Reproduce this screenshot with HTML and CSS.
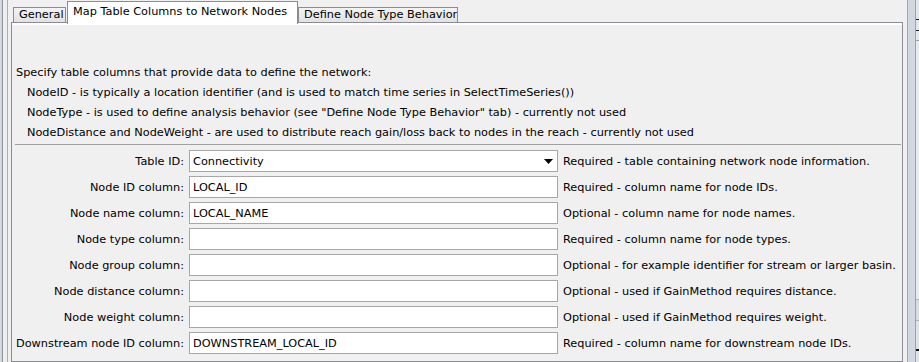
FILE: index.html
```html
<!DOCTYPE html>
<html lang="en">
<head>
  <meta charset="UTF-8">
  <title>Map Table Columns to Network Nodes</title>
  <link rel="stylesheet" href="styles.css">
</head>
<body>
  <div class="window">
    <div class="edge-left"></div>

    <div class="main">
      <div class="tabs">
        <div class="tab tab-general">General</div>
        <div class="tab tab-map active">Map Table Columns to Network Nodes</div>
        <div class="tab tab-define">Define Node Type Behavior</div>
      </div>

      <div class="panel">
        <div class="intro">
          <p>Specify table columns that provide data to define the network:</p>
          <p class="indent">NodeID - is typically a location identifier (and is used to match time series in SelectTimeSeries())</p>
          <p class="indent">NodeType - is used to define analysis behavior (see "Define Node Type Behavior" tab) - currently not used</p>
          <p class="indent">NodeDistance and NodeWeight - are used to distribute reach gain/loss back to nodes in the reach - currently not used</p>
        </div>

        <hr class="sep">

        <div class="form">
          <label>Table ID:</label>
          <div class="combo">
            <span>Connectivity</span>
            <svg width="9" height="5" viewBox="0 0 9 5"><path d="M0 0H9L4.5 5Z" fill="#000"/></svg>
          </div>
          <span class="desc">Required - table containing network node information.</span>

          <label for="nodeId">Node ID column:</label>
          <input type="text" id="nodeId" value="LOCAL_ID">
          <span class="desc">Required - column name for node IDs.</span>

          <label for="nodeName">Node name column:</label>
          <input type="text" id="nodeName" value="LOCAL_NAME">
          <span class="desc">Optional - column name for node names.</span>

          <label for="nodeType">Node type column:</label>
          <input type="text" id="nodeType" value="">
          <span class="desc">Required - column name for node types.</span>

          <label for="nodeGroup">Node group column:</label>
          <input type="text" id="nodeGroup" value="">
          <span class="desc">Optional - for example identifier for stream or larger basin.</span>

          <label for="nodeDistance">Node distance column:</label>
          <input type="text" id="nodeDistance" value="">
          <span class="desc">Optional - used if GainMethod requires distance.</span>

          <label for="nodeWeight">Node weight column:</label>
          <input type="text" id="nodeWeight" value="">
          <span class="desc">Optional - used if GainMethod requires weight.</span>

          <label for="downstreamId">Downstream node ID column:</label>
          <input type="text" id="downstreamId" value="DOWNSTREAM_LOCAL_ID">
          <span class="desc">Required - column name for downstream node IDs.</span>
        </div>
      </div>
    </div>

    <div class="gap"></div>
    <div class="edge-right">
      <div class="bar"></div>
      <div class="outer"></div>
    </div>
  </div>
</body>
</html>
```

FILE: styles.css
```css
* {
  box-sizing: border-box;
}

body {
  margin: 0;
  height: 362px;
  overflow: hidden;
  background: #f0f0f0;
  font-family: "DejaVu Sans", sans-serif;
  font-size: 11.3px;
  color: #000;
}

.window {
  display: flex;
  height: 362px;
}

/* window frame strips */
.edge-left {
  width: 8px;
  flex: none;
  background: linear-gradient(to right, #d3d8de 0 2px, #8e9299 2px 3px, #eceef0 3px 7px, #a9abaf 7px 8px);
}

.gap {
  width: 4px;
  flex: none;
}

.edge-right {
  width: 12px;
  flex: none;
  display: flex;
}

.edge-right .bar {
  width: 9px;
  background: linear-gradient(to right, #a3a6ab 0 1px, #d1d8df 1px 8px, #9da2a8 8px 9px);
}

.edge-right .outer {
  flex: 1;
  background: linear-gradient(to bottom,
    #e3e7eb 0 19px, #1e1e1e 19px 20px,
    #e3e7eb 20px 30px, #1e1e1e 30px 31px,
    #e3e7eb 31px 40px, #9aa0a6 40px 41px,
    #e8ebee 41px 299px, #b0b4b8 299px 300px,
    #d8dcdf 300px 320px, #b0b4b8 320px 321px,
    #e0e3e6 321px 349px, #111 349px 351px,
    #e0e3e6 351px);
}

.main {
  flex: 1;
  min-width: 0;
  padding-left: 3px;
  display: flex;
  flex-direction: column;
}

/* tabs */
.tabs {
  display: flex;
  align-items: flex-end;
  height: 22px;
  padding-left: 2px;
  position: relative;
  z-index: 1;
}

.tab {
  height: 15px;
  padding-left: 5px;
  border: 1px solid #898c95;
  border-bottom: none;
  background: linear-gradient(#f3f3f3, #e2e2e2);
  line-height: 13px;
  white-space: nowrap;
  overflow: hidden;
}

.tab-general {
  width: 53px;
  margin-right: 1px;
}

.tab-map {
  width: 231px;
}

.tab-define {
  width: 160px;
}

.tab.active {
  height: 23px;
  margin-bottom: -2px;
  background: #fff;
  line-height: 20px;
}

/* content panel */
.panel {
  flex: 1;
  border: 1px solid #898c95;
  background: #f0f0f0;
  box-shadow: inset 0 2px #fff;
  padding: 0 1px 0 4px;
}

.intro {
  padding-top: 40px;
  line-height: 20px;
}

.intro p {
  margin: 0;
  white-space: nowrap;
}

.intro .indent {
  padding-left: 11px;
}

.sep {
  border: 0;
  border-top: 1px solid #a0a0a0;
  margin: 1px 0 0 -1px;
}

.form {
  display: grid;
  grid-template-columns: 168px 369px auto;
  column-gap: 5px;
  row-gap: 4px;
  margin-top: 5px;
  align-items: center;
}

.form label {
  text-align: right;
  white-space: nowrap;
}

.form input,
.combo {
  height: 22px;
  border: 1px solid #a7a7a7;
  background: #fff;
  padding: 0 3px;
  font-family: inherit;
  font-size: inherit;
  color: #000;
  margin: 0;
  outline: none;
}

.combo {
  display: flex;
  align-items: center;
  justify-content: space-between;
  padding-right: 4px;
}

.desc {
  white-space: nowrap;
}
```
